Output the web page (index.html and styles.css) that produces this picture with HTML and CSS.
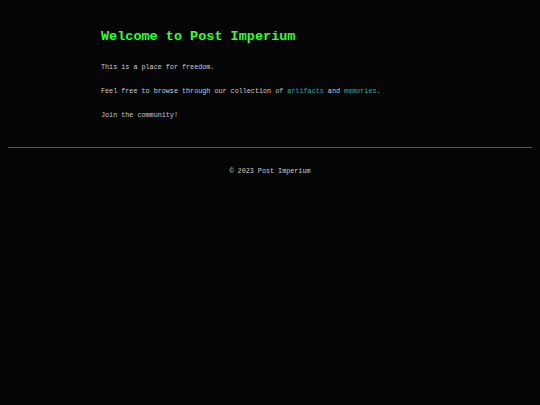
FILE: index.html
```html
<!DOCTYPE html>
<html lang="en">
<head>
<meta charset="utf-8">
<title>Post Imperium</title>
<link rel="stylesheet" href="styles.css">
</head>
<body>
<main class="content">
  <h1 class="title">Welcome to Post Imperium</h1>
  <p class="text">This is a place for freedom.</p>
  <p class="text">Feel free to browse through our collection of <a class="link" href="#">artifacts</a> and <a class="link" href="#">memories</a>.</p>
  <p class="text">Join the community!</p>
</main>
<hr class="rule">
<footer class="footer">© 2023 Post Imperium</footer>
</body>
</html>
```
FILE: styles.css
```css
html, body {
  margin: 0;
  padding: 0;
  background: #050505;
  height: 100%;
}
body {
  font-family: "Liberation Mono", "Courier New", monospace;
  color: #cccccc;
}
.content {
  max-width: 338px;
  margin: 0 auto;
  padding: 29px 0 27px;
}
.title {
  margin: 0 0 18px;
  font-size: 13.5px;
  line-height: 15px;
  font-weight: bold;
  color: #33ff33;
}
.text {
  margin: 0 0 14px;
  font-size: 6.75px;
  line-height: 10px;
}
.text:last-child {
  margin-bottom: 0;
}
.link {
  color: #20b2aa;
  text-decoration: none;
}
.rule {
  margin: 0 8px;
  border: 0;
  border-top: 1px solid #555555;
  height: 0;
}
.footer {
  padding-top: 18px;
  text-align: center;
  font-size: 6.75px;
  line-height: 10px;
  color: #cccccc;
}
```
